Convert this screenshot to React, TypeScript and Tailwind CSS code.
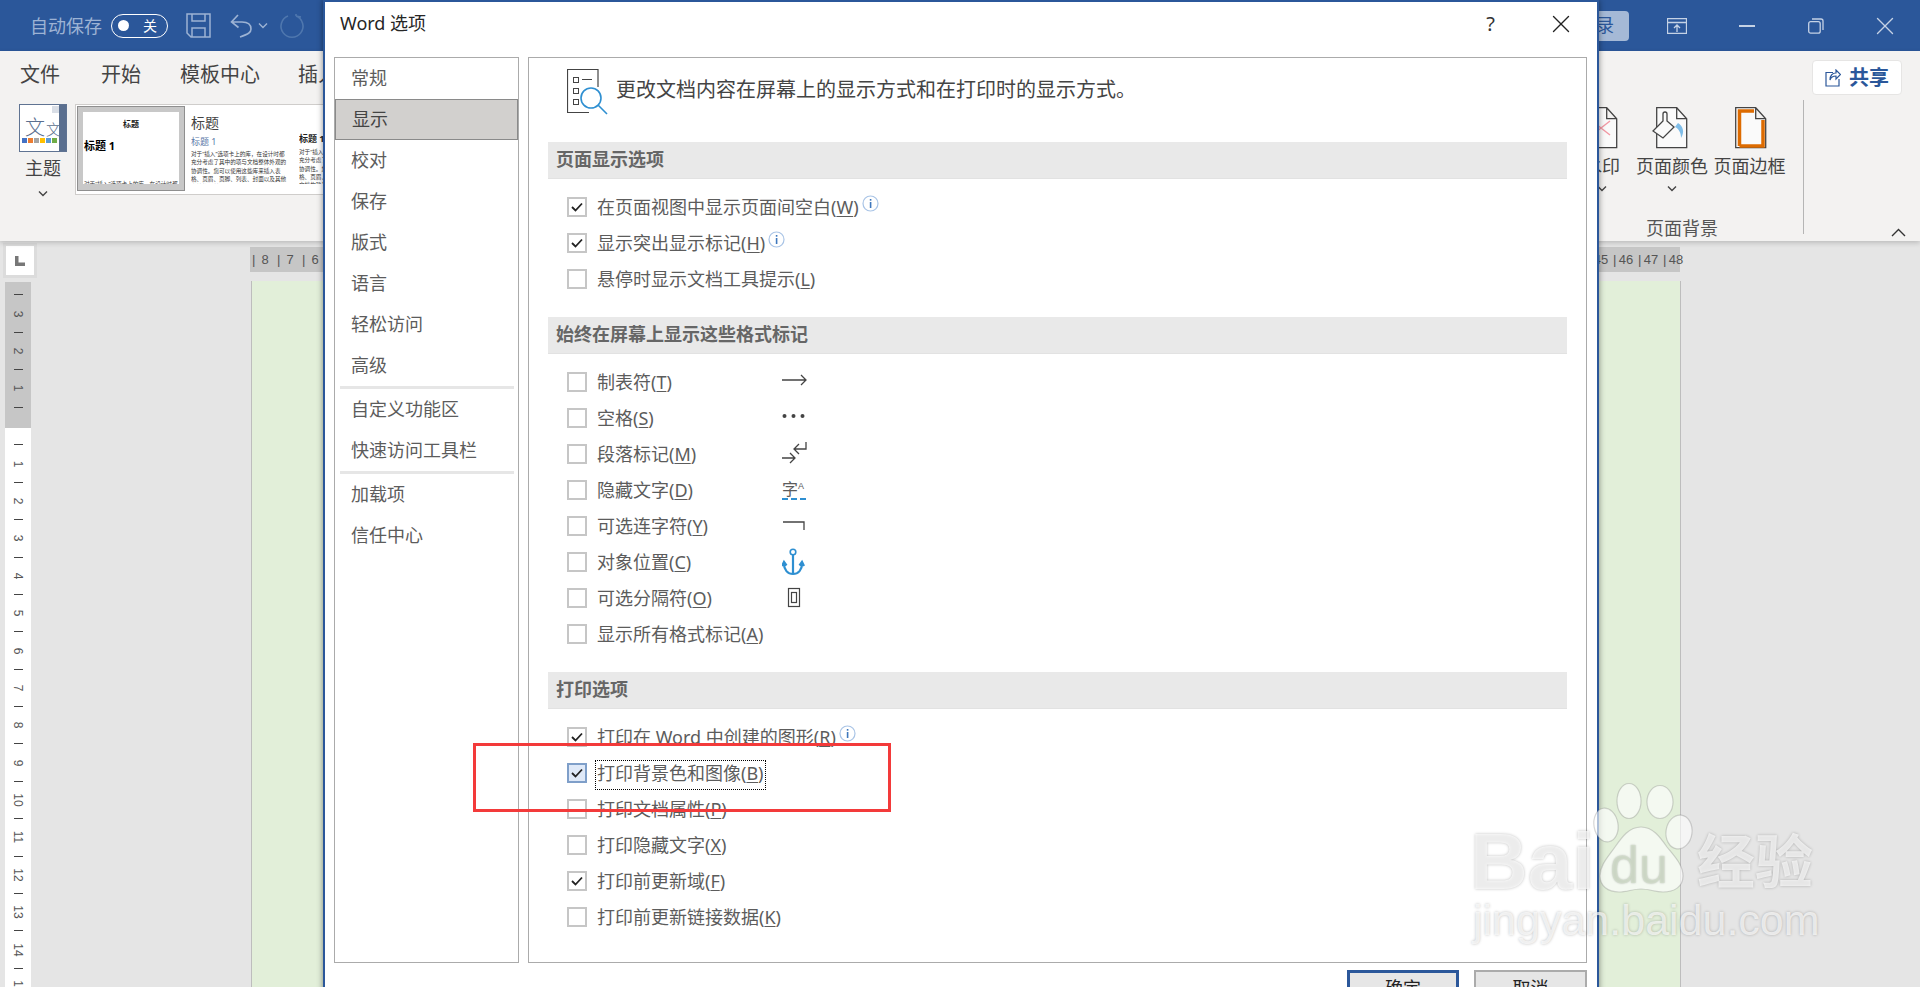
import React from "react";
import { X } from "lucide-react";

const Chevron = ({ up = false, color = "#444" }: { up?: boolean; color?: string }) => (
  <svg width="10" height="6" viewBox="0 0 10 6" fill="none" stroke={color} strokeWidth="1.4">
    <path d={up ? "M1 5.5 5 1.5l4 4" : "M1 .5l4 4 4-4"} />
  </svg>
);

const Info = () => (
  <svg width="17" height="17" viewBox="0 0 17 17" className="ml-[3px] -mt-[7px] shrink-0">
    <circle cx="8.5" cy="8.5" r="7.5" fill="#fff" stroke="#a9c4e6" strokeWidth="1.2" />
    <rect x="7.8" y="7" width="1.6" height="6" fill="#3f78bd" />
    <rect x="7.8" y="4" width="1.6" height="1.7" fill="#3f78bd" />
  </svg>
);

const Checkbox = ({ checked, focused }: { checked?: boolean; focused?: boolean }) => (
  <span
    className={`flex h-5 w-5 shrink-0 items-center justify-center border-2 ${
      focused ? "border-[#7f9fc9] bg-[#dfe9f8]" : "border-[#c6c6c6] bg-white"
    }`}
  >
    {checked && (
      <svg width="12" height="10" viewBox="0 0 12 10" fill="none" stroke="#222" strokeWidth="1.8">
        <path d="M1 5l3.500 3.500L11 1.500" />
      </svg>
    )}
  </span>
);

type RowProps = {
  text: string;
  hotkey: string;
  checked?: boolean;
  focused?: boolean;
  info?: boolean;
  symbol?: React.ReactNode;
};

const Row = ({ text, hotkey, checked, focused, info, symbol }: RowProps) => (
  <div className="flex h-9 items-center pl-[19px]">
    <Checkbox checked={checked} focused={focused} />
    <span className={`ml-[10px] whitespace-nowrap text-[18px] leading-6 text-[#5c5c5c] ${symbol ? "w-[185px]" : ""}`}>
      {text}(<span className="underline underline-offset-2">{hotkey}</span>)
    </span>
    {info && <Info />}
    {symbol}
  </div>
);

const SectionHeader = ({ children }: { children: React.ReactNode }) => (
  <div className="flex h-[37px] items-center border-b border-[#e2e2e2] bg-[#e9e9e9] pb-[2px] pl-2 text-[18px] font-bold text-[#666]">
    {children}
  </div>
);

const NavItem = ({ label, active }: { label: string; active?: boolean }) => (
  <div
    className={`flex h-[41px] items-center pl-4 text-[18px] text-[#5c5c5c] ${
      active ? "border border-[#8a8a8a] bg-[#d2d0ce] text-[#444]" : ""
    }`}
  >
    {label}
  </div>
);

const NavSeparator = () => <div className="ml-[5px] mr-[4px] h-[3px] bg-[#e6e6e6]" />;

const ArrowSymbol = () => (
  <svg width="26" height="30" viewBox="0 0 26 30" fill="none" stroke="#444" strokeWidth="1.3" className="shrink-0">
    <path d="M0 13h24M19 8l5 5-5 5" />
  </svg>
);
const DotsSymbol = () => (
  <svg width="26" height="30" viewBox="0 0 26 30" fill="#444" className="shrink-0">
    <circle cx="2.500" cy="13" r="2" />
    <circle cx="11.500" cy="13" r="2" />
    <circle cx="20.500" cy="13" r="2" />
  </svg>
);
const ParagraphSymbol = () => (
  <svg width="26" height="30" viewBox="0 0 26 30" fill="none" stroke="#444" strokeWidth="1.3" className="shrink-0">
    <path d="M0 19h13M8 14l5 5-5 5M24 3v7H12M17 5l-5 5 5 5" />
  </svg>
);
const HiddenSymbol = () => (
  <div className="flex h-[20px] w-[24px] shrink-0 items-start border-b-2 border-dashed border-[#2e8fd1] text-[16px] leading-[18px] text-[#5c5c5c]">
    字<span className="font-['Liberation_Sans',sans-serif] text-[9px] leading-[12px]">A</span>
  </div>
);
const HyphenSymbol = () => (
  <svg width="26" height="30" viewBox="0 0 26 30" fill="none" stroke="#444" strokeWidth="1.3" className="shrink-0">
    <path d="M1 11h21v8" />
  </svg>
);
const AnchorSymbol = () => (
  <svg width="26" height="30" viewBox="0 0 26 30" fill="none" stroke="#2e8fd1" strokeWidth="2.2" className="shrink-0">
    <circle cx="11" cy="5" r="2.800" strokeWidth="1.6" />
    <path d="M11 8v19M2 16c-.5 7 4 11 9 11s9.500-4 9-11M0 19l2-4 2.500 3.500M17.500 18.500 20 15l2 4" />
  </svg>
);
const BreakSymbol = () => (
  <svg width="26" height="30" viewBox="0 0 26 30" fill="none" stroke="#444" strokeWidth="1.2" className="shrink-0">
    <rect x="6.500" y="5.500" width="11" height="18" />
    <rect x="9.500" y="9.500" width="5" height="10" />
  </svg>
);

const HeaderIcon = () => (
  <svg width="42" height="46" viewBox="0 0 42 46" fill="none" className="shrink-0">
    <path d="M31 18V.5H.5v43H22" stroke="#444" strokeWidth="1.2" />
    <rect x="6.500" y="8.500" width="5" height="5" stroke="#444" />
    <path d="M15 10.500h10" stroke="#444" />
    <rect x="6.500" y="19.500" width="5" height="5" stroke="#444" />
    <rect x="6.500" y="30.500" width="5" height="5" stroke="#444" />
    <circle cx="24" cy="29" r="10" fill="#fff" stroke="#2e8fd1" strokeWidth="1.6" />
    <path d="M31 36l9 9" stroke="#2e8fd1" strokeWidth="1.6" />
  </svg>
);

const rulerNumbers = ["3", "2", "1"];
const whiteRuler = ["1", "2", "3", "4", "5", "6", "7", "8", "9", "10", "11", "12", "13", "14", "15"];

const RulerTick = () => (
  <div className="flex h-[18.7px] items-center justify-center">
    <div className="h-px w-[9px] bg-[#444]" />
  </div>
);
const RulerNumber = ({ n }: { n: string }) => (
  <div className="flex h-[18.7px] items-center justify-center">
    <span className="rotate-90 font-['Liberation_Sans',sans-serif] text-[12px] leading-none text-[#555]">{n}</span>
  </div>
);

const VerticalRuler = () => (
  <div className="ml-[5px] mt-[4px] w-[26px]">
    <div className="h-[146px] bg-[#c6c6c6] pt-[3.6px]">
      {rulerNumbers.map((n) => (
        <React.Fragment key={n}>
          <RulerTick />
          <RulerNumber n={n} />
        </React.Fragment>
      ))}
      <RulerTick />
    </div>
    <div className="h-[560px] bg-white pt-[7.6px]">
      {whiteRuler.map((n) => (
        <React.Fragment key={n}>
          <RulerTick />
          <RulerNumber n={n} />
        </React.Fragment>
      ))}
    </div>
  </div>
);

const RulerUnit = ({ n }: { n: string }) => (
  <div className="flex w-[25px] items-center text-[13px] leading-none text-[#555]">
    <span className="w-[3px]">|</span>
    <span className="w-[20px] text-center">{n}</span>
  </div>
);

const Watermark = () => (
  <div className="pointer-events-none absolute left-[1470px] top-[780px] h-[207px] w-[350px]">
    <svg width="350" height="125" viewBox="0 0 350 125" className="absolute left-0 top-0">
      <g fill="rgba(255,255,255,0.62)" stroke="rgba(120,120,120,0.3)" strokeWidth="1.2">
        <ellipse cx="136" cy="45" rx="12" ry="17" transform="rotate(-10 136 45)" />
        <ellipse cx="159" cy="21" rx="12" ry="17.500" />
        <ellipse cx="190" cy="22" rx="13" ry="16.500" />
        <ellipse cx="209" cy="52" rx="13" ry="17" transform="rotate(8 209 52)" />
        <path d="M171 47c12 0 19 10 26 20 8 10 16 18 16 29 0 11-9 16-20 16-8 0-14-3-22-3s-14 3-22 3c-11 0-19-6-19-16 0-11 8-19 15-29 7-10 14-20 26-20z" />
      </g>
    </svg>
    <span className="absolute left-0 top-[32px] font-['Liberation_Sans',sans-serif] text-[80px] font-bold leading-[100px] text-white/70 [text-shadow:0_0_3px_rgba(0,0,0,0.25)]">
      Bai
    </span>
    <span className="absolute left-[140px] top-[55px] font-['Liberation_Sans',sans-serif] text-[52px] leading-[60px] text-[#d3e0ca]/70 [text-shadow:0_0_2px_rgba(0,0,0,0.25)]">
      du
    </span>
    <span className="absolute left-[227px] top-[41px] text-[58px] font-bold leading-[80px] text-white/70 [text-shadow:0_0_3px_rgba(0,0,0,0.25)]">
      经验
    </span>
    <span className="absolute left-[3px] top-[115px] font-['Liberation_Sans',sans-serif] text-[43px] leading-[50px] text-white/70 [text-shadow:0_0_3px_rgba(0,0,0,0.25)]">
      jingyan.baidu.com
    </span>
  </div>
);

const OptionsDialog = () => (
  <div className="absolute left-[323px] top-0 flex h-[1010px] w-[1276px] flex-col border-2 border-b-0 border-[#2b579a] bg-white shadow-[0_0_6px_rgba(0,0,0,0.45)]">
    <div className="flex h-[55px] items-center justify-between pb-[12px] pl-[15px]">
      <span className="text-[18px] text-[#262626]">Word 选项</span>
      <div className="flex items-center">
        <span className="mr-[51px] text-[20px] text-[#333]">?</span>
        <X size={30} strokeWidth={1.1} color="#222" className="mr-[21px]" />
      </div>
    </div>
    <div className="ml-[9px] mr-[10px] flex h-[906px] gap-[9px]">
      <div className="w-[185px] shrink-0 border border-[#ababab]">
        <NavItem label="常规" />
        <NavItem label="显示" active />
        {["校对", "保存", "版式", "语言", "轻松访问", "高级"].map((l) => (
          <NavItem key={l} label={l} />
        ))}
        <NavSeparator />
        <NavItem label="自定义功能区" />
        <NavItem label="快速访问工具栏" />
        <NavSeparator />
        <NavItem label="加载项" />
        <NavItem label="信任中心" />
      </div>
      <div className="flex-1 border border-[#ababab] px-[19px]">
        <div className="flex h-[84px] items-start gap-[7px] pl-[19px] pt-[11px]">
          <HeaderIcon />
          <span className="mt-[9px] text-[20px] leading-6 text-[#444]">
            更改文档内容在屏幕上的显示方式和在打印时的显示方式。
          </span>
        </div>

        <SectionHeader>页面显示选项</SectionHeader>
        <div className="mb-5 mt-[10px]">
          <Row text="在页面视图中显示页面间空白" hotkey="W" checked info />
          <Row text="显示突出显示标记" hotkey="H" checked info />
          <Row text="悬停时显示文档工具提示" hotkey="L" />
        </div>

        <SectionHeader>始终在屏幕上显示这些格式标记</SectionHeader>
        <div className="mb-5 mt-[10px]">
          <Row text="制表符" hotkey="T" symbol={<ArrowSymbol />} />
          <Row text="空格" hotkey="S" symbol={<DotsSymbol />} />
          <Row text="段落标记" hotkey="M" symbol={<ParagraphSymbol />} />
          <Row text="隐藏文字" hotkey="D" symbol={<HiddenSymbol />} />
          <Row text="可选连字符" hotkey="Y" symbol={<HyphenSymbol />} />
          <Row text="对象位置" hotkey="C" symbol={<AnchorSymbol />} />
          <Row text="可选分隔符" hotkey="O" symbol={<BreakSymbol />} />
          <Row text="显示所有格式标记" hotkey="A" />
        </div>

        <SectionHeader>打印选项</SectionHeader>
        <div className="mt-[10px]">
          <Row text="打印在 Word 中创建的图形" hotkey="R" checked info />
          <div className="relative">
            <Row text="打印背景色和图像" hotkey="B" checked focused />
            <div className="absolute left-[47px] top-[5px] h-[30px] w-[171px] border border-dotted border-black" />
          </div>
          <Row text="打印文档属性" hotkey="P" />
          <Row text="打印隐藏文字" hotkey="X" />
          <Row text="打印前更新域" hotkey="F" checked />
          <Row text="打印前更新链接数据" hotkey="K" />
        </div>
      </div>
    </div>
    <div className="mr-[10px] mt-[7px] flex justify-end gap-[15px]">
      <button className="h-9 w-[112px] border-[3px] border-[#2b579a] bg-[#e6e6e6] text-[18px] text-[#222]">确定</button>
      <button className="h-9 w-[113px] border-2 border-[#ababab] bg-[#e6e6e6] text-[18px] text-[#222]">取消</button>
    </div>
  </div>
);

const TitleBar = () => (
  <div className="flex h-[51px] shrink-0 items-center justify-between bg-[#2b579a]">
    <div className="flex items-center pl-[30px]">
      <span className="text-[18px] leading-6 text-[#9db3d4]">自动保存</span>
      <div className="ml-[9px] flex h-[24px] w-[57px] items-center justify-between rounded-full border border-white pl-[6px] pr-[10px]">
        <span className="h-[11px] w-[11px] rounded-full bg-white" />
        <span className="text-[14px] leading-none text-white">关</span>
      </div>
      <svg width="25" height="25" viewBox="0 0 25 25" fill="none" stroke="#9db3d4" strokeWidth="1.5" className="ml-[18px]">
        <path d="M1 1h23v23H5l-4-4zM6 1v7h13V1M6 24v-9h13v9" />
      </svg>
      <svg width="24" height="24" viewBox="0 0 24 24" fill="none" stroke="#9db3d4" strokeWidth="1.6" className="ml-[19px]">
        <path d="M8 1 1.500 8l7 5.500M2 8h10c6 0 9 3 9 7 0 3-2 5-11 8" />
      </svg>
      <span className="ml-[4px]">
        <Chevron color="#9db3d4" />
      </span>
      <svg width="26" height="26" viewBox="0 0 26 26" fill="none" stroke="#4f77ae" strokeWidth="1.6" className="ml-[11px]">
        <path d="M17 3a11 11 0 1 1-8 0M17 3V1M17 3l5 1" />
      </svg>
    </div>
    <div className="flex items-center">
      <div className="mr-[38px] flex h-[30px] w-[34px] items-center justify-end rounded-r bg-[#a5b9d6] pr-[15px] text-[18px] text-[#2b579a]">
        录
      </div>
      <svg width="20" height="16" viewBox="0 0 20 16" fill="none" stroke="#c5d2e5" strokeWidth="1.3" className="mr-[52px]">
        <path d="M.5.5h19v15H.5zM.5 4.500h19M10 14V7M7 10l3-3 3 3" />
      </svg>
      <div className="mr-[53px] h-[2px] w-4 bg-[#c5d2e5]" />
      <svg width="16" height="16" viewBox="0 0 16 16" fill="none" stroke="#c5d2e5" strokeWidth="1.3" className="mr-[46px]">
        <rect x=".7" y="3.700" width="11.500" height="11.500" rx="2" />
        <path d="M4 1h9a2 2 0 0 1 2 2v9" />
      </svg>
      <X size={30} strokeWidth={1.1} color="#c5d2e5" className="mr-[20px]" />
    </div>
  </div>
);

const ThemeIcon = () => (
  <div className="relative h-12 w-12 overflow-hidden border border-[#5f7392] bg-white">
    <div className="absolute right-0 top-0 h-full w-[7px] bg-[#5a6f8f]" />
    <div className="absolute right-[7px] top-px h-[7px] w-[7px] bg-[#d9dee6]" />
    <span className="absolute left-[5px] top-[13px] text-[20px] font-light leading-none text-[#5a6f8f]">文</span>
    <span className="absolute left-[26px] top-[17px] text-[15px] font-light leading-none text-[#5a6f8f]">文</span>
    <div className="absolute bottom-[8px] left-[2px] flex">
      {["bg-[#4472c4]", "bg-[#ed7d31]", "bg-[#a5a5a5]", "bg-[#ffc000]", "bg-[#5b9bd5]", "bg-[#70ad47]"].map((c) => (
        <span key={c} className={`mr-[1px] h-[5px] w-[5px] ${c}`} />
      ))}
    </div>
  </div>
);

const bodySample =
  "对于“插入”选项卡上的库，在设计时都充分考虑了其中的项与文档整体外观的协调性。您可以使用这些库来插入表格、页眉、页脚、列表、封面以及其他文档构建基块";

const StyleGallery = () => (
  <div className="ml-[8px] mt-[4px] flex h-[91px] w-[260px] overflow-hidden border border-[#cfcdcb] bg-white p-px">
    <div className="h-[85px] w-[108px] shrink-0 border border-[#8f8f8f] bg-[#c8c8c8] p-[5px]">
      <div className="h-[72px] overflow-hidden bg-white px-[1px]">
        <p className="pt-[6px] text-center text-[8px] font-bold leading-[12px] text-[#222]">标题</p>
        <p className="mt-[9px] text-[11px] font-bold leading-[14px] text-black">标题 1</p>
        <p className="mt-[27px] text-[5.600px] leading-[8.300px] text-[#333]">对于“插入”选项卡上的库，在设计时都</p>
      </div>
    </div>
    <div className="ml-[6px] h-[78px] w-[97px] shrink-0 overflow-hidden pt-[7px]">
      <p className="text-[14px] leading-[20px] text-[#444]">标题</p>
      <p className="mt-[3px] text-[9px] leading-[12px] text-[#5a78a8]">标题 1</p>
      <p className="mt-[2px] text-[5.600px] leading-[8.300px] text-[#333]">{bodySample}</p>
    </div>
    <div className="ml-[11px] h-[78px] w-[97px] shrink-0 overflow-hidden pt-[27px]">
      <p className="text-[9px] font-bold leading-[12px] text-[#222]">标题 1</p>
      <p className="mt-[3px] text-[5.600px] leading-[8.300px] text-[#333]">{bodySample}</p>
    </div>
  </div>
);

const PageColumn = ({ label, width, chevron, icon }: { label: string; width: string; chevron?: boolean; icon: React.ReactNode }) => (
  <div className={`flex flex-col items-center ${width}`}>
    <div className="flex h-[42px] items-start justify-center">{icon}</div>
    <span className="mt-[5px] whitespace-nowrap text-[18px] leading-6 text-[#444]">{label}</span>
    {chevron && (
      <span className="mt-[8px] flex">
        <Chevron />
      </span>
    )}
  </div>
);

const PagePath = "M.7.7h20l10 11v29H.7zM20.7.7v11h10";

const Ribbon = () => (
  <div className="relative z-10 flex h-[190px] shrink-0 flex-col bg-[#f3f2f1] shadow-[0_2px_5px_rgba(0,0,0,0.18)]">
    <div className="flex h-[49px] items-center justify-between pb-[2px] pl-5 text-[20px] text-[#444]">
      <div className="flex items-center">
        <span>文件</span>
        <span className="ml-[41px]">开始</span>
        <span className="ml-[39px]">模板中心</span>
        <span className="ml-[38px]">插入</span>
      </div>
      <div className="mr-[18px] mt-[6px] flex h-[35px] w-[90px] items-center justify-center gap-[8px] rounded border border-[#e6e5e4] bg-white text-[#2b579a]">
        <svg width="16" height="18" viewBox="0 0 16 18" fill="none" stroke="#2b579a" strokeWidth="1.2">
          <path d="M8 3.500H1v13.500h13v-7M5 11c0-5 3-7 6-7V1l4.500 4.500L11 10V7c-3 0-5 1-6 4z" />
        </svg>
        <span className="text-[20px] font-bold leading-none">共享</span>
      </div>
    </div>
    <div className="flex flex-1 justify-between">
      <div className="flex items-start">
        <div className="ml-[19px] flex w-[48px] flex-col items-center pt-[4px]">
          <ThemeIcon />
          <span className="mt-[4px] text-[18px] leading-6 text-[#444]">主题</span>
          <span className="mt-[11px] flex">
            <Chevron />
          </span>
        </div>
        <StyleGallery />
      </div>
      <div className="flex items-start">
        <div className="flex flex-col pt-[7px]">
          <div className="flex items-start">
            <PageColumn
              label="水印"
              width="w-[62px]"
              chevron
              icon={
                <svg width="32" height="42" viewBox="0 0 32 42" fill="#fafafa" stroke="#444" strokeWidth="1.3">
                  <path d={PagePath} />
                  <path d="M6 14l18 14M24 14 6 28" stroke="#f29aa5" strokeWidth="1.5" />
                </svg>
              }
            />
            <PageColumn
              label="页面颜色"
              width="w-[78px]"
              chevron
              icon={
                <svg width="36" height="42" viewBox="0 0 36 42" fill="none" className="-ml-[4px]">
                  <path d="M4.700.7h20l10 11v29h-30z" fill="#fafafa" stroke="#444" strokeWidth="1.3" />
                  <path d="M24.700.7v11h10" stroke="#444" strokeWidth="1.3" />
                  <path d="M26 16c5 3 7 9 3 15 0-5-2-9-6-11z" fill="#7fbde8" />
                  <path d="M1 24 11 14V7a2 2 0 0 1 4 0v7l7 6-11 11z" fill="#fafafa" stroke="#444" strokeWidth="1.3" />
                </svg>
              }
            />
            <PageColumn
              label="页面边框"
              width="w-[77px]"
              icon={
                <svg width="32" height="42" viewBox="0 0 32 42" fill="#fafafa" className="ml-[3px]">
                  <path d={PagePath} stroke="#444" strokeWidth="1.3" />
                  <path d="M4.500 39V4H19M28 13v26H4.500" fill="none" stroke="#dd6b00" strokeWidth="3.500" />
                </svg>
              }
            />
          </div>
          <span className="mt-[24px] self-end pr-[70px] text-[18px] leading-6 text-[#555]">页面背景</span>
        </div>
        <div className="ml-[15px] h-[134px] w-px bg-[#b5b5b5]" />
        <div className="ml-[87px] mr-[14px] mt-[128px] flex">
          <svg width="15" height="9" viewBox="0 0 15 9" fill="none" stroke="#333" strokeWidth="1.4">
            <path d="M1 8l6.500-6.500L14 8" />
          </svg>
        </div>
      </div>
    </div>
  </div>
);

const Workspace = () => (
  <div className="flex flex-1 overflow-hidden bg-[#e5e5e5]">
    <div className="w-[250px] shrink-0">
      <div className="ml-[3px] mt-[2px] flex h-[35px] w-[34px] items-center justify-center border-[3px] border-[#dcdcdc] bg-white">
        <svg width="10" height="10" viewBox="0 0 10 10" fill="#777">
          <path d="M0 0h3.500v6.500H10V10H0z" />
        </svg>
      </div>
      <VerticalRuler />
    </div>
    <div className="w-[1431px] shrink-0">
      <div className="mr-px mt-[6px] flex h-[25px] items-center justify-between bg-[#c6c6c6] pl-[2px] font-['Liberation_Sans',sans-serif]">
        <div className="flex">
          {["8", "7", "6"].map((n) => (
            <RulerUnit key={n} n={n} />
          ))}
        </div>
        <div className="-mr-[8px] flex">
          {["45", "46", "47", "48"].map((n) => (
            <RulerUnit key={n} n={n} />
          ))}
        </div>
      </div>
      <div className="ml-px mt-[9px] h-[720px] border-x border-[#bdbdbd] bg-[#e2efd9]" />
    </div>
  </div>
);

const App = () => (
  <div className="relative flex h-[987px] w-[1920px] flex-col overflow-hidden bg-[#e5e5e5] font-['Noto_Sans','Noto_Sans_CJK_SC',sans-serif]">
    <TitleBar />
    <Ribbon />
    <Workspace />
    <div className="absolute inset-0 z-20 overflow-hidden">
      <OptionsDialog />
      {/* 红框标注 */}
      <div className="absolute left-[473px] top-[743px] h-[69px] w-[418px] border-[3px] border-[#f33a3a]" />
      <Watermark />
    </div>
  </div>
);

export default App;
